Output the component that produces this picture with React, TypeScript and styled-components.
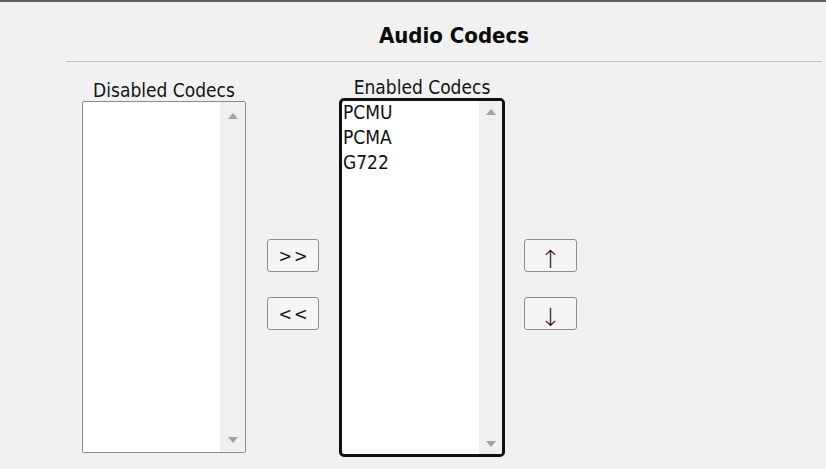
import React from 'react';
import styled, { createGlobalStyle } from 'styled-components';

const GlobalStyle = createGlobalStyle`
  html, body {
    margin: 0;
    padding: 0;
    background: #f1f1f1;
  }
  body {
    font-family: "DejaVu Sans Condensed", "DejaVu Sans", sans-serif;
    font-stretch: condensed;
    color: #111;
  }
`;

const Page = styled.div`
  width: 826px;
  height: 469px;
  box-sizing: border-box;
  border-top: 2px solid #5c5c5c;
  background: #f1f1f1;
  overflow: hidden;
`;

const Header = styled.div`
  margin: 0 4px 0 66px;
  padding: 21px 0 12px 20px;
  border-bottom: 1px solid #b9c4d8;
  text-align: center;
`;

const Title = styled.h1`
  margin: 0;
  font-size: 22px;
  line-height: 26px;
  font-weight: bold;
  color: #0a0a0a;
`;

const Row = styled.div`
  display: flex;
  align-items: flex-start;
  padding: 17px 0 0 82px;
`;

const Column = styled.div<{ $width: number; $shift?: number; $gap?: number }>`
  display: flex;
  flex-direction: column;
  width: ${p => p.$width}px;
  margin-left: ${p => p.$gap ?? 0}px;
  margin-top: ${p => p.$shift ?? 0}px;
`;

const Label = styled.div`
  font-size: 19px;
  line-height: 22px;
  text-align: center;
  color: #141414;
  white-space: nowrap;
`;

const ListBox = styled.div<{ $focused?: boolean; $height: number }>`
  display: flex;
  box-sizing: border-box;
  height: ${p => p.$height}px;
  background: #fff;
  border: ${p => (p.$focused ? '3px solid #111' : '1px solid #8c8c8c')};
  border-radius: ${p => (p.$focused ? 5 : 2)}px;
  overflow: hidden;
`;

const Items = styled.ul`
  flex: 1;
  list-style: none;
  margin: -1px 0 0;
  padding: 0 0 0 1px;
`;

const Item = styled.li`
  font-size: 19px;
  line-height: 25px;
  color: #111;
`;

const ScrollBar = styled.div<{ $width: number; $top: number; $bottom: number }>`
  width: ${p => p.$width}px;
  background: #f0f0f0;
  display: flex;
  flex-direction: column;
  justify-content: space-between;
  align-items: center;
  padding: ${p => p.$top}px 0 ${p => p.$bottom}px;
`;

const Arrow = styled.div<{ $down?: boolean }>`
  width: 0;
  height: 0;
  border-left: 5px solid transparent;
  border-right: 5px solid transparent;
  ${p =>
    p.$down
      ? 'border-top: 6px solid #a3a3a3;'
      : 'border-bottom: 6px solid #a3a3a3;'}
`;

const ButtonStack = styled.div<{ $gap: number; $width: number }>`
  display: flex;
  flex-direction: column;
  gap: 25px;
  margin: 160px 0 0 ${p => p.$gap}px;
  width: ${p => p.$width}px;
`;

const MoveButton = styled.button`
  box-sizing: border-box;
  height: 33px;
  padding: 0;
  border: 1px solid #8e8e8e;
  border-radius: 3px;
  background: #f5f5f5;
  font-family: "DejaVu Sans Condensed", "DejaVu Sans", sans-serif;
  font-stretch: condensed;
  font-size: 18px;
  color: #1a1a1a;
  letter-spacing: 2px;
  text-indent: 2px;
`;

const OrderButton = styled(MoveButton)`
  font-family: "DejaVu Sans", sans-serif;
  font-stretch: normal;
  font-weight: 200;
  font-size: 25px;
  line-height: 26px;
  letter-spacing: 0;
  text-indent: 0;
  color: #3d0f2b;
  padding-top: 7px;
`;

const ScrollArrows: React.FC<{ width: number; top: number; bottom: number }> = ({ width, top, bottom }) => (
  <ScrollBar $width={width} $top={top} $bottom={bottom}>
    <Arrow />
    <Arrow $down />
  </ScrollBar>
);

const App: React.FC = () => {
  const enabled = ['PCMU', 'PCMA', 'G722'];
  return (
    <>
      <GlobalStyle />
      <Page>
        <Header>
          <Title>Audio Codecs</Title>
        </Header>
        <Row>
          <Column $width={164}>
            <Label>Disabled Codecs</Label>
            <ListBox $height={352}>
              <Items />
              <ScrollArrows width={25} top={11} bottom={9} />
            </ListBox>
          </Column>
          <ButtonStack $gap={21} $width={52}>
            <MoveButton>&gt;&gt;</MoveButton>
            <MoveButton>&lt;&lt;</MoveButton>
          </ButtonStack>
          <Column $width={166} $gap={20} $shift={-3}>
            <Label>Enabled Codecs</Label>
            <ListBox $focused $height={359}>
              <Items>
                {enabled.map(c => (
                  <Item key={c}>{c}</Item>
                ))}
              </Items>
              <ScrollArrows width={23} top={8} bottom={7} />
            </ListBox>
          </Column>
          <ButtonStack $gap={19} $width={53}>
            <OrderButton>↑</OrderButton>
            <OrderButton>↓</OrderButton>
          </ButtonStack>
        </Row>
      </Page>
    </>
  );
};

export default App;
